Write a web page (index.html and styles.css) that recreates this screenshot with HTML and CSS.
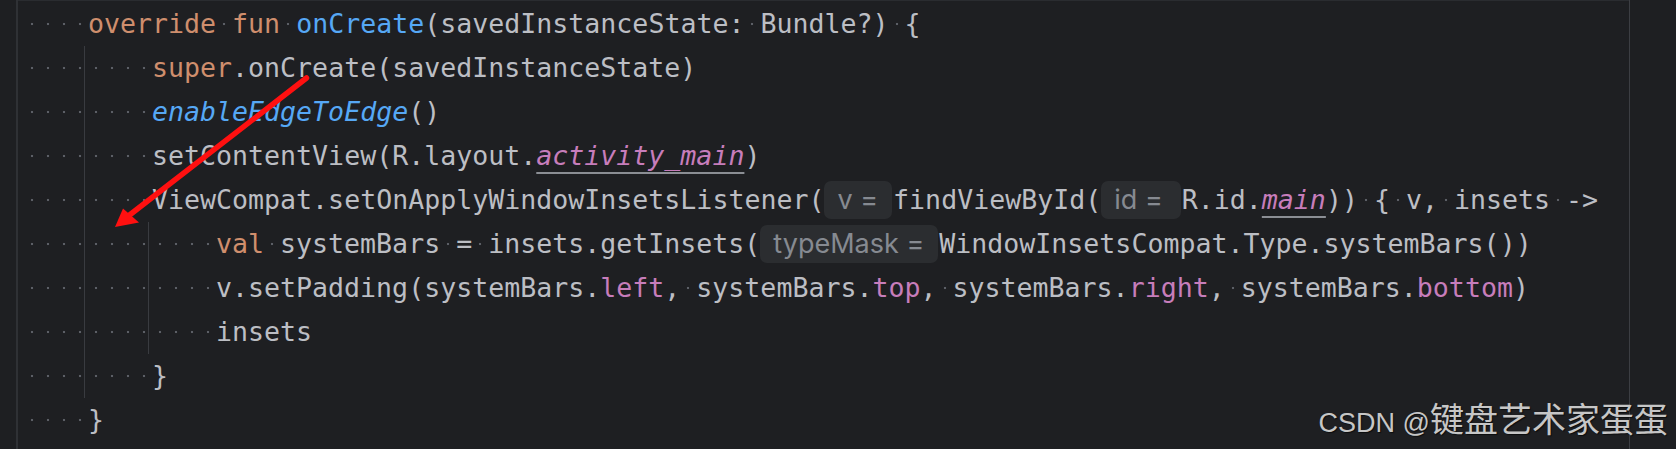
FILE: index.html
```html
<!DOCTYPE html>
<html lang="en">
<head>
<meta charset="utf-8">
<title>Editor</title>
<link rel="stylesheet" href="styles.css">
</head>
<body>
<div class="editor">
  <div class="gutter"></div>
  <div class="code">
    <div class="line"><span class="s"> </span><span class="s"> </span><span class="s"> </span><span class="s"> </span><span class="kw">override</span><span class="s"> </span><span class="kw">fun</span><span class="s"> </span><span class="fn">onCreate</span>(savedInstanceState:<span class="s"> </span>Bundle?)<span class="s"> </span>{</div>
    <div class="block b1">
      <div class="line"><span class="s"> </span><span class="s"> </span><span class="s"> </span><span class="s"> </span><span class="s"> </span><span class="s"> </span><span class="s"> </span><span class="s"> </span><span class="kw">super</span>.onCreate(savedInstanceState)</div>
      <div class="line"><span class="s"> </span><span class="s"> </span><span class="s"> </span><span class="s"> </span><span class="s"> </span><span class="s"> </span><span class="s"> </span><span class="s"> </span><span class="fn it">enableEdgeToEdge</span>()</div>
      <div class="line"><span class="s"> </span><span class="s"> </span><span class="s"> </span><span class="s"> </span><span class="s"> </span><span class="s"> </span><span class="s"> </span><span class="s"> </span>setContentView(R.layout.<span class="prop it ul">activity_main</span>)</div>
      <div class="line"><span class="s"> </span><span class="s"> </span><span class="s"> </span><span class="s"> </span><span class="s"> </span><span class="s"> </span><span class="s"> </span><span class="s"> </span>ViewCompat.setOnApplyWindowInsetsListener(<span class="hint">v =</span>findViewById(<span class="hint hint-wide">id =</span>R.id.<span class="prop it ul">main</span>))<span class="s"> </span>{<span class="s"> </span>v,<span class="s"> </span>insets<span class="s"> </span>-&gt;</div>
      <div class="block b2">
        <div class="line"><span class="s"> </span><span class="s"> </span><span class="s"> </span><span class="s"> </span><span class="s"> </span><span class="s"> </span><span class="s"> </span><span class="s"> </span><span class="s"> </span><span class="s"> </span><span class="s"> </span><span class="s"> </span><span class="kw">val</span><span class="s"> </span>systemBars<span class="s"> </span>=<span class="s"> </span>insets.getInsets(<span class="hint">typeMask =</span>WindowInsetsCompat.Type.systemBars())</div>
        <div class="line"><span class="s"> </span><span class="s"> </span><span class="s"> </span><span class="s"> </span><span class="s"> </span><span class="s"> </span><span class="s"> </span><span class="s"> </span><span class="s"> </span><span class="s"> </span><span class="s"> </span><span class="s"> </span>v.setPadding(systemBars.<span class="prop">left</span>,<span class="s"> </span>systemBars.<span class="prop">top</span>,<span class="s"> </span>systemBars.<span class="prop">right</span>,<span class="s"> </span>systemBars.<span class="prop">bottom</span>)</div>
        <div class="line"><span class="s"> </span><span class="s"> </span><span class="s"> </span><span class="s"> </span><span class="s"> </span><span class="s"> </span><span class="s"> </span><span class="s"> </span><span class="s"> </span><span class="s"> </span><span class="s"> </span><span class="s"> </span>insets</div>
      </div>
      <div class="line"><span class="s"> </span><span class="s"> </span><span class="s"> </span><span class="s"> </span><span class="s"> </span><span class="s"> </span><span class="s"> </span><span class="s"> </span>}</div>
    </div>
    <div class="line"><span class="s"> </span><span class="s"> </span><span class="s"> </span><span class="s"> </span>}</div>
  </div>
  <svg class="arrow" width="1676" height="449" viewBox="0 0 1676 449">
    <line x1="306.5" y1="78" x2="127" y2="217" stroke="#ff1010" stroke-width="5.5" stroke-linecap="round"/>
    <polygon points="115,227 123,208.5 139,222.5" fill="#ff1010"/>
  </svg>
  <div class="watermark"><span class="wm-latin">CSDN @</span><span class="wm-cjk">键盘艺术家蛋蛋</span></div>
</div>
</body>
</html>
```
FILE: styles.css
```css
html, body {
  margin: 0;
  padding: 0;
  background: #1e1f22;
}

.editor {
  position: relative;
  display: flex;
  width: 1676px;
  height: 449px;
  overflow: hidden;
  background: #1e1f22;
  color: #bcbec4;
  font-family: "DejaVu Sans Mono", "Liberation Mono", monospace;
  font-size: 26.6px;
}

.gutter {
  width: 16px;
  flex: none;
}

.code {
  flex: none;
  width: 1605px;
  padding: 2px 0 0 6px;
  border-left: 2px solid #2f3135;
  border-right: 1px solid #3c3e43;
  box-shadow: inset 0 1px 0 #2a2c30;
}

.line {
  height: 44px;
  line-height: 44px;
  white-space: pre;
}

.block {
  background-image: linear-gradient(#393b40, #393b40);
  background-repeat: no-repeat;
  background-size: 1px 100%;
}

.b1 { background-position: 60px 0; }
.b2 { background-position: 124px 0; }

.s {
  display: inline-block;
  width: 1ch;
  height: 44px;
  vertical-align: top;
  background-image: radial-gradient(circle at 50% 22px, #5c5f66 0, #5c5f66 0.9px, rgba(92,95,102,0) 1.6px);
}

.kw { color: #cf8e6d; }
.fn { color: #56a8f5; }
.prop { color: #c77dbb; }
.it { font-style: italic; }
.ul {
  text-decoration: underline;
  text-decoration-color: #8b8e94;
  text-decoration-thickness: 1.5px;
  text-underline-offset: 7px;
  text-decoration-skip-ink: none;
}

.hint {
  display: inline-block;
  vertical-align: top;
  margin: 3px 1px 0 0;
  height: 38px;
  line-height: 37px;
  padding: 0 14px 0 13px;
  border-radius: 7px;
  background: #2b2d30;
  color: #868a91;
  font-family: "Inter", "Noto Sans", sans-serif;
  font-size: 27px;
}

.hint-wide {
  padding-right: 18px;
}

.arrow {
  position: absolute;
  left: 0;
  top: 0;
  pointer-events: none;
}

.watermark {
  position: absolute;
  right: 8px;
  bottom: 12px;
  display: flex;
  align-items: baseline;
  color: #c6c6c6;
  text-shadow: 1px 1px 1px rgba(0, 0, 0, 0.6);
  line-height: 1;
}

.wm-latin {
  font-family: "Liberation Sans", Arial, sans-serif;
  font-size: 27px;
  white-space: pre;
}

.wm-cjk {
  font-family: "Noto Sans CJK SC", sans-serif;
  font-size: 34px;
}
```
